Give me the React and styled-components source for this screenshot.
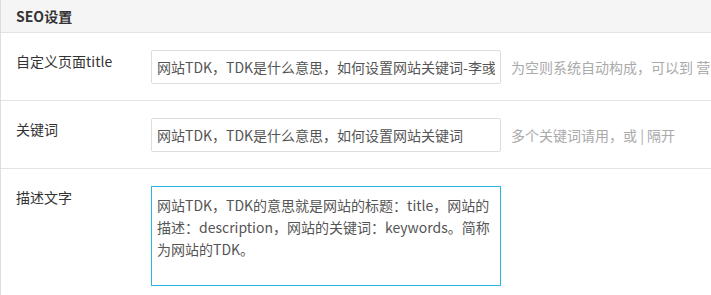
import React from 'react';
import styled, { createGlobalStyle } from 'styled-components';

const GlobalStyle = createGlobalStyle`
    html, body {
        margin: 0;
        padding: 0;
        background: #fff;
        overflow: hidden;
    }
    body {
        font-family: "Noto Sans CJK SC", "Noto Sans", sans-serif;
        font-size: 14px;
        color: #333;
    }
`

const Panel = styled.div`
    width: 740px;
    border-left: 1px solid #ddd;
    background: #fff;
`

const PanelHeader = styled.div`
    height: 32px;
    line-height: 32px;
    padding-left: 15px;
    background: #f5f5f5;
    border-bottom: 1px solid #e3e3e3;
    font-weight: bold;
    font-size: 14px;
    color: #333;
`

const Row = styled.div`
    display: flex;
    align-items: flex-start;
    padding: 17px 0 16px 15px;
    border-bottom: ${props => props.last ? 'none' : '1px solid #e3e3e3'};
`

const Label = styled.div`
    width: 135px;
    flex-shrink: 0;
    line-height: 22px;
    color: #333;
    white-space: nowrap;
`

const TextInput = styled.input`
    box-sizing: border-box;
    width: 350px;
    height: 34px;
    padding: 0 5px;
    border: 1px solid #ddd;
    border-radius: 2px;
    font-family: inherit;
    font-size: 14px;
    color: #555;
    outline: none;
    flex-shrink: 0;
`

const TextArea = styled.textarea`
    box-sizing: border-box;
    width: 350px;
    height: 100px;
    padding: 7px 5px;
    border: 1px solid #29b6e3;
    border-radius: 0;
    font-family: inherit;
    font-size: 14px;
    line-height: 22px;
    color: #555;
    outline: none;
    resize: none;
    flex-shrink: 0;
`

const Help = styled.span`
    margin-left: 10px;
    line-height: 34px;
    color: #aaa;
    white-space: nowrap;
`

export default function App() {
    return (
        <>
            <GlobalStyle />
            <Panel>
                <PanelHeader>SEO设置</PanelHeader>
                <Row>
                    <Label>自定义页面title</Label>
                    <TextInput readOnly value="网站TDK，TDK是什么意思，如何设置网站关键词-李彧博客" />
                    <Help>为空则系统自动构成，可以到 营销设置</Help>
                </Row>
                <Row>
                    <Label>关键词</Label>
                    <TextInput readOnly value="网站TDK，TDK是什么意思，如何设置网站关键词" />
                    <Help>多个关键词请用，或 | 隔开</Help>
                </Row>
                <Row last>
                    <Label>描述文字</Label>
                    <TextArea readOnly value="网站TDK，TDK的意思就是网站的标题：title，网站的描述：description，网站的关键词：keywords。简称为网站的TDK。" />
                </Row>
            </Panel>
        </>
    )
}
